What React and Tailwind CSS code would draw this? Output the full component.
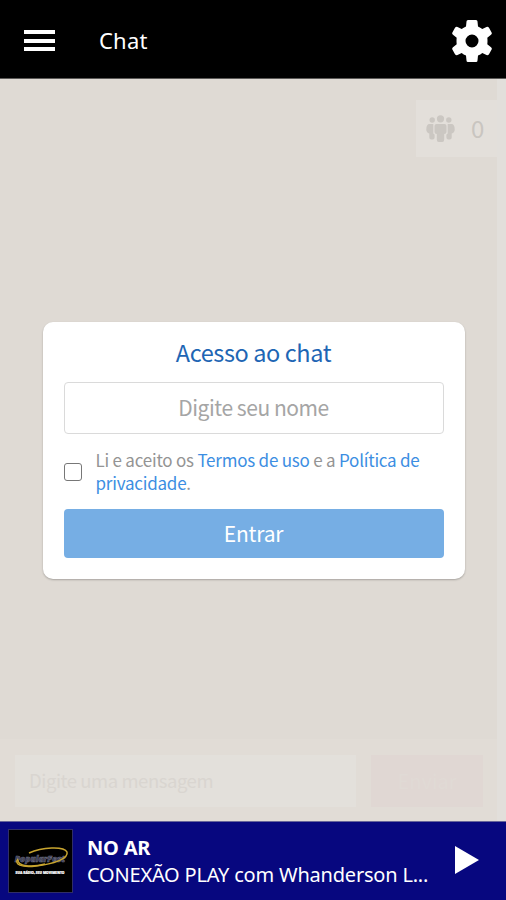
import React from "react";

const SOURCE = "font-['Noto_Sans_CJK_SC','Noto_Sans',sans-serif]";

function Gear() {
  return (
    <svg viewBox="-20 -21 40 42" className="h-[42px] w-[40px]" fill="#fff">
      <path
        fillRule="evenodd"
        d="M-4-21H4Q5.500-21 5.500-19.500L6-14.500Q8.500-13.500 10.300-12L14.500-14Q16-14.500 17-13.200L19.600-8.600Q20.300-7.300 19-6.300L15.300-3.200Q15.700 0 15.300 3.200L19 6.300Q20.300 7.300 19.600 8.600L17 13.200Q16 14.500 14.500 14L10.300 12Q8.500 13.500 6 14.500L5.500 19.500Q5.500 21 4 21H-4Q-5.500 21-5.500 19.500L-6 14.500Q-8.500 13.500-10.300 12L-14.500 14Q-16 14.500-17 13.200L-19.600 8.600Q-20.300 7.300-19 6.300L-15.300 3.200Q-15.700 0-15.300-3.200L-19-6.300Q-20.300-7.300-19.600-8.600L-17-13.200Q-16-14.500-14.500-14L-10.300-12Q-8.500-13.500-6-14.500L-5.500-19.500Q-5.500-21-4-21zM0-6.500A6.500 6.500 0 1 0 0 6.500A6.500 6.500 0 1 0 0-6.500z"
      />
    </svg>
  );
}

function People() {
  return (
    <svg viewBox="0 0 29 27" className="h-[27px] w-[29px]" fill="#cbc7c2">
      <circle cx="14.5" cy="3.8" r="3.6" />
      <circle cx="6.2" cy="5" r="2.7" />
      <circle cx="22.8" cy="5" r="2.7" />
      <path d="M10.500 9h8q2 0 2 2v6q0 2-2.300 2v5.500q0 2.500-2 2.500h-3.400q-2 0-2-2.500V19q-2.300 0-2.300-2v-6q0-2 2-2z" />
      <path d="M3.500 9H7.300v9.500l1.300 1v3q0 2-2 2H5.300q-2 0-2-2v-4Q.3 17.500.3 14.500q0-5.500 3.200-5.500z" />
      <path d="M25.500 9h-3.800v9.500l-1.300 1v3q0 2 2 2h1.300q2 0 2-2v-4q3-1 3-4 0-5.500-3.200-5.500z" />
    </svg>
  );
}

function StationLogo() {
  return (
    <svg viewBox="0 0 63 62" className="h-[62px] w-[63px] shrink-0 bg-black outline outline-1 outline-[#302e67]">
      <text x="31" y="31.500" textAnchor="middle" fontSize="8.500" fontWeight="800" fontStyle="italic" fill="#34364e" stroke="#77788a" strokeWidth=".5" fontFamily="Open Sans, sans-serif">PopularFest</text>
      <g fill="none" stroke="#c8a52f">
        <path d="M20 23C33 17 55 16 58 22C60 29 44 34 27 36C12 38 5 34 9 29" strokeWidth="1.500" />
        <path d="M9 30C8 36 22 38 36 34" strokeWidth="1.500" />
      </g>
      <text x="31" y="44" textAnchor="middle" fontSize="3.300" fontWeight="800" fill="#fff" stroke="#fff" strokeWidth=".2" fontFamily="Open Sans, sans-serif">SUA RÁDIO, SEU MOVIMENTO</text>
    </svg>
  );
}

export default function App() {
  return (
    <div className="relative flex h-[900px] w-[506px] flex-col overflow-hidden bg-[#dfdad4] font-['Noto_Sans',sans-serif]">
      <header className="flex h-[79px] shrink-0 items-center border-b border-[#5c5a58] bg-black pl-6 pr-[14.5px] pt-[3px] text-white">
        <div className="flex w-[31px] flex-col gap-[4.5px]">
          <span className="h-[4px] bg-white" />
          <span className="h-[4px] bg-white" />
          <span className="h-[4px] bg-white" />
        </div>
        <h1 className="ml-11 grow pb-[2px] text-[22px] leading-8 tracking-[0.2px]">Chat</h1>
        <Gear />
      </header>

      <main className={`flex grow flex-row ${SOURCE}`}>
        <div className="flex w-[497px] flex-col">
          <div className="mt-[21px] flex h-[57px] w-[81px] items-center gap-4 self-end bg-[#e3dfda] pl-[10px] text-[#c9c5c0]">
            <People />
            <span className="pb-[2px] text-[24px] leading-8">0</span>
          </div>
          <div className="grow" />
          <div className="flex h-[82px] gap-[15px] bg-[#e1dcd6] pl-[15px] pt-4">
            <div className="flex h-[52px] w-[341px] items-center bg-[#e3e0db] pl-[14px] text-[18.5px] tracking-[-0.45px] text-[#d9d5d0]">Digite uma mensagem</div>
            <div className="flex h-[52px] w-[112px] items-center justify-center bg-[#e0d7d3] text-[20px] text-[#e0dad5]">Enviar</div>
          </div>
        </div>
        <div className="grow bg-[#e2dfdb]" />
      </main>

      <footer className="flex h-[79px] shrink-0 items-center border-t border-[#68669a] bg-[#07077f] pl-[9px] text-white">
        <StationLogo />
        <div className="ml-[15px] w-[365px] whitespace-nowrap text-[20px] leading-[27px] tracking-[-0.2px]">
          <div className="font-bold">NO AR</div>
          <div>CONEXÃO PLAY com Whanderson L...</div>
        </div>
        <svg viewBox="0 0 24 28" className="mb-[2px] ml-[3px] h-7 w-6" fill="#fff">
          <path d="M0 0L24 14L0 28z" />
        </svg>
      </footer>

      <section className={`absolute left-[42.5px] top-[322px] flex h-[257px] w-[422px] flex-col rounded-[10px] bg-white px-[21px] shadow-[0_1px_2px_rgba(0,0,0,0.25)] ${SOURCE}`}>
        <h2 className="mt-[14px] text-center text-[23.5px] leading-8 tracking-[-0.4px] text-[#1e66b4]">Acesso ao chat</h2>
        <div className="mt-[14px] flex h-[52px] items-center justify-center rounded-[4px] border border-[#dadada] text-[21px] tracking-[-0.45px] text-[#a5a5a5]">Digite seu nome</div>
        <div className="mt-[14px] flex h-[46px] items-center">
          <span className="mt-[2px] h-[18px] w-[18px] shrink-0 rounded-[3px] border border-[#777]" />
          <div className="ml-[14px] whitespace-nowrap text-[17px] leading-[23px] tracking-[-0.22px] text-[#949494]">
            <p>Li e aceito os <span className="text-[#3c8ee2]">Termos de uso</span> e a <span className="text-[#3c8ee2]">Política de</span></p>
            <p><span className="text-[#3c8ee2]">privacidade</span>.</p>
          </div>
        </div>
        <button className="mt-[15px] h-[49px] rounded-[4px] bg-[#76aee4] pt-px text-[21px] tracking-[-0.2px] text-white">Entrar</button>
      </section>
    </div>
  );
}
